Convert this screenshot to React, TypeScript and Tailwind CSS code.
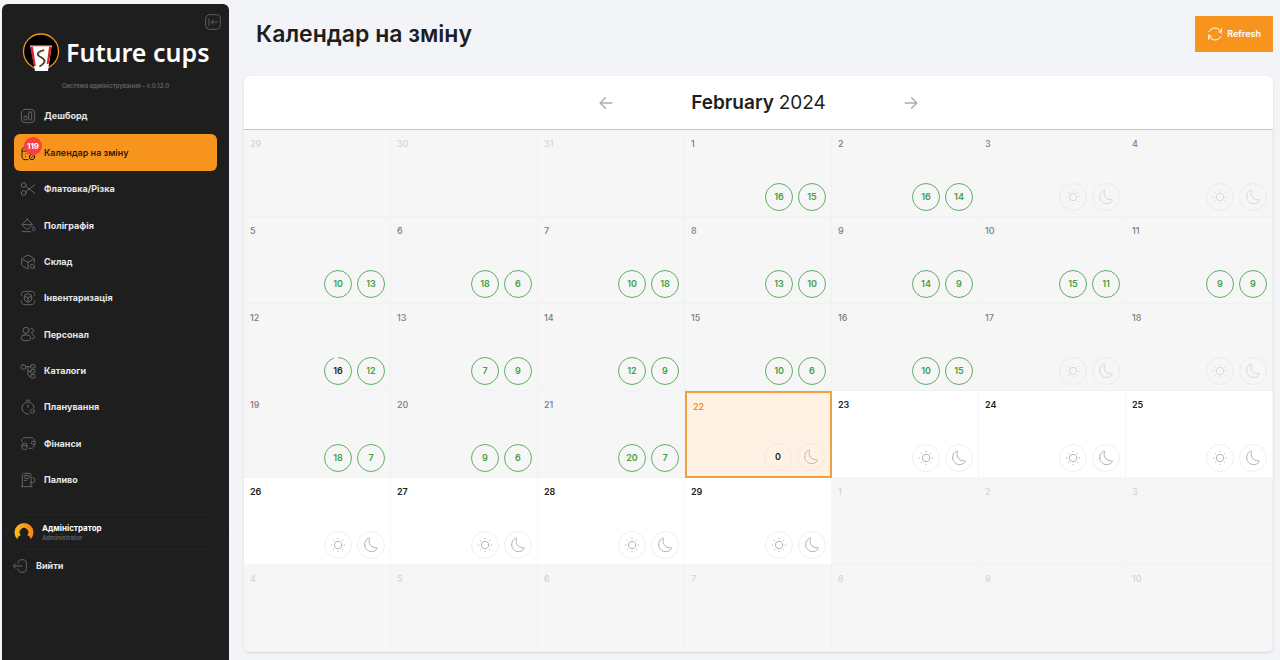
import React, { useState } from "react";

type Shift = number | "sun" | "moon";

type Day = {
  day: number;
  kind: "out" | "past" | "today" | "next";
  shifts: Shift[];
};

const past = (day: number, a: Shift = "sun", b: Shift = "moon"): Day => ({ day, kind: "past", shifts: [a, b] });
const next = (day: number): Day => ({ day, kind: "next", shifts: ["sun", "moon"] });
const out = (day: number): Day => ({ day, kind: "out", shifts: [] });

const days: Day[] = [
  out(29), out(30), out(31), past(1, 16, 15), past(2, 16, 14), past(3), past(4),
  past(5, 10, 13), past(6, 18, 6), past(7, 10, 18), past(8, 13, 10), past(9, 14, 9), past(10, 15, 11), past(11, 9, 9),
  past(12, 16, 12), past(13, 7, 9), past(14, 12, 9), past(15, 10, 6), past(16, 10, 15), past(17), past(18),
  past(19, 18, 7), past(20, 9, 6), past(21, 20, 7), { day: 22, kind: "today", shifts: [0, "moon"] }, next(23), next(24), next(25),
  next(26), next(27), next(28), next(29), out(1), out(2), out(3),
  out(4), out(5), out(6), out(7), out(8), out(9), out(10),
];

const cellStyle = {
  out: "bg-[#f6f6f6] border-[#f0f1f3] text-[#d3d3d5] font-medium",
  past: "bg-[#f6f6f6] border-[#f0f1f3] text-[#7c7c7e] font-medium",
  today: "bg-[#fff2e5] text-[#f7931e] font-semibold",
  next: "bg-white border-[#f6f6f7] text-[#222224] font-semibold",
};

function Icon({ children, className = "size-4" }: { children: React.ReactNode; className?: string }) {
  return (
    <svg
      viewBox="0 0 24 24"
      className={`shrink-0 ${className}`}
      fill="none"
      stroke="currentColor"
      strokeWidth="1.5"
      strokeLinecap="round"
      strokeLinejoin="round"
      aria-hidden="true"
    >
      {children}
    </svg>
  );
}

const menu = [
  {
    label: "Дешборд",
    icon: (
      <>
        <rect x="2" y="2" width="20" height="20" rx="6" />
        <rect x="6" y="12" width="4.5" height="6" rx="1.8" />
        <rect x="13" y="6" width="4.5" height="12" rx="1.8" />
      </>
    ),
  },
  {
    label: "Календар на зміну",
    badge: 119,
    icon: (
      <>
        <path d="M8 2v3M16 2v3M3 9h17M12 22H8c-3.500 0-5-2-5-5V8.500c0-3 1.500-5 5-5h8c3.500 0 5 2 5 5V12" />
        <circle cx="18" cy="18" r="4" />
        <path d="M16.500 18l1 1 2-2M8 13h.01M12 13h.01M8 17h.01" />
      </>
    ),
  },
  {
    label: "Флатовка/Різка",
    icon: (
      <>
        <circle cx="5.500" cy="6" r="3.500" />
        <circle cx="5.500" cy="18" r="3.500" />
        <path d="M22 6L8.500 16M22 18L8.500 8" />
      </>
    ),
  },
  {
    label: "Поліграфія",
    icon: (
      <>
        <path d="M10 2l7.500 8c1 1 1 2 0 3l-4.500 4.500c-1.500 1.200-3 1.200-4.500 0L4 13c-1-1-1-2 0-3l7.500-7M3.500 11.500H18M3 22h13" />
        <path d="M20.500 15s-2 2.200-2 3.600a2 2 0 004 0c0-1.400-2-3.600-2-3.600z" />
      </>
    ),
  },
  {
    label: "Склад",
    icon: (
      <>
        <path d="M3 7.500l9 5 9-5M12 21.500v-9M21.500 13V9c0-1.600-1-3-2.400-3.700L14 2.500c-1.200-.7-2.800-.7-4 0L4.800 5.300C3.500 6 2.500 7.500 2.500 9v6c0 1.600 1 3 2.300 3.700l5.200 2.800c.7.400 1.300.5 2 .5" />
        <circle cx="18.500" cy="18.500" r="3" />
        <path d="M22.500 22.500l-1.500-1.500" />
      </>
    ),
  },
  {
    label: "Інвентаризація",
    icon: (
      <>
        <path d="M2 8V7c0-3 2-5 5-5h10c3 0 5 2 5 5v1M22 16v1c0 3-2 5-5 5H7c-3 0-5-2-5-5v-1" />
        <path d="M12 5.500l5.500 3v6.500L12 18.500 6.500 15V8.500zM6.800 9l5.200 3 5.200-3M12 12v6" />
      </>
    ),
  },
  {
    label: "Персонал",
    icon: (
      <>
        <circle cx="9" cy="6.500" r="4.500" />
        <path d="M16.500 3.500a3.600 3.600 0 010 7.200M18.500 19c2-.5 3.500-1.500 3.500-3s-1.500-2.500-3.500-3" />
        <rect x="2" y="13.500" width="14" height="8.500" rx="4.250" />
      </>
    ),
  },
  {
    label: "Каталоги",
    icon: (
      <>
        <rect x="1.500" y="3" width="7" height="6" rx="2" />
        <rect x="16" y="2.500" width="6.500" height="5" rx="1.500" />
        <rect x="16" y="10" width="6.500" height="5" rx="1.500" />
        <rect x="16" y="17.500" width="6.500" height="5" rx="1.500" />
        <path d="M8.500 5.500H16M12 5.500V17c0 2 1 3 3 3h1M12 12.500h4" />
      </>
    ),
  },
  {
    label: "Планування",
    icon: (
      <>
        <path d="M13 22.500h-1a9 9 0 119-9v.5M12 8.500V13M9 1.800h6" />
        <circle cx="18.500" cy="18.500" r="3" />
      </>
    ),
  },
  {
    label: "Фінанси",
    icon: (
      <>
        <path d="M2.500 10V8.500c0-3 2-4.500 4.500-4.500h10c2.800 0 4.500 1.800 4.500 4.500v1h-2.300c-1.200 0-2.200 1-2.200 2.300s1 2.200 2.200 2.200h2.300v1c0 2.800-1.800 5-4.500 5h-3" />
        <rect x="3" y="12.500" width="7.500" height="9.500" rx="2.500" />
        <path d="M3 16h7.500M22.500 9.500V14" />
      </>
    ),
  },
  {
    label: "Паливо",
    icon: (
      <>
        <path d="M3.500 22V5c0-2 1.300-3 3-3h7c2 0 3 1 3 3v17M2 22h16M6.500 12.500h3.500M16.500 16H20c1 0 2-1 2-2v-4l-2.500-1.500" />
        <rect x="6.500" y="5" width="7" height="4.500" rx="1.500" />
      </>
    ),
  },
];

function Logo() {
  return (
    <svg viewBox="0 0 38 38" className="size-[38px]" aria-hidden="true">
      <circle cx="19" cy="18.500" r="17.500" fill="#000" stroke="#f7931e" strokeWidth="1.300" />
      <path d="M8.500 13h21l-3.500 25H13z" fill="#fff" />
      <path d="M8 13h2.800l3 20h-1.800zM30 13h-2.800l-2.500 18h1.800z" fill="#d8232a" />
      <path d="M8 12.500h22v1.300H8z" fill="#f3b8b8" />
      <path d="M22 17c-4 .8-7.500 2.800-6 5.200 1.200 2 6.500 2.600 6.500 5.800 0 2.500-2.500 4-5 5.500" fill="none" stroke="#2b2413" strokeWidth="1.500" />
      <path d="M22.500 18c-3 .8-5.500 2-5 3.800M23.500 27c.4 2.600-1.500 4.500-4 6" fill="none" stroke="#e39a2b" strokeWidth=".9" />
    </svg>
  );
}

function ShiftBadge({ shift, day, kind }: { shift: Shift; day: number; kind: Day["kind"] }) {
  const soft = kind === "past" ? "border-[#ebebec] text-[#d6d7da]" : kind === "today" ? "border-[#f5e8dd] text-[#bdb9b9]" : "border-[#f0f0f1] text-[#b3b3b7]";

  if (typeof shift !== "number") {
    return (
      <span className={`flex size-7 items-center justify-center rounded-full border ${soft}`}>
        {shift === "sun" ? (
          <Icon>
            <circle cx="12" cy="12" r="5.500" />
            <path d="M12 2v.6M12 21.400v.6M2 12h.6M21.400 12h.6M4.900 4.900l.5.5M18.600 18.600l.5.5M19.100 4.900l-.5.5M5.400 18.600l-.5.5" />
          </Icon>
        ) : (
          <Icon>
            <path d="M2.500 12.400c.4 5.100 4.700 9.300 9.900 9.500 3.700.2 7-1.500 8.900-4.300.8-1.100.4-1.800-1-1.600-.7.100-1.400.2-2.100.1-5-.2-9-4.400-9.100-9.300 0-1.300.3-2.600.8-3.700.5-1.300-.1-1.900-1.400-1.300-4 1.700-6.500 5.900-6 10.600z" />
          </Icon>
        )}
      </span>
    );
  }

  const partial = kind === "past" && day === 12 && shift === 16;
  if (partial) {
    return (
      <span className="relative flex size-7 items-center justify-center font-semibold text-[#222224]">
        <svg viewBox="0 0 28 28" className="absolute inset-0 size-7 -rotate-90" aria-hidden="true">
          <circle cx="14" cy="14" r="13.500" fill="none" stroke="#5fae63" pathLength="100" strokeDasharray="95 5" />
        </svg>
        {shift}
      </span>
    );
  }

  return (
    <span
      className={`flex size-7 items-center justify-center rounded-full border font-semibold ${
        kind === "today" ? "border-[#f5e8dd] text-[#222224]" : "border-[#5fae63] text-[#43a047]"
      }`}
    >
      {shift}
    </span>
  );
}

function Sidebar() {
  const [active, setActive] = useState<number>(1);

  return (
    <aside className="mt-1 ml-0.5 flex w-[227px] shrink-0 flex-col rounded-t-md bg-[#1e1e1e] text-[9px]">
      <div className="flex justify-end pt-2.5 pr-2">
        <button aria-label="Згорнути меню" className="text-[#5c5c5c]">
          <Icon>
            <rect x="1" y="1" width="22" height="22" rx="6" />
            <path d="M6 7v10M19 12H9.500M13 8.500L9.500 12l3.500 3.500" />
          </Icon>
        </button>
      </div>
      <div className="mt-0.5 flex h-10 items-center gap-1.5 pl-5">
        <Logo />
        <span className="font-['Noto_Sans','Open_Sans',sans-serif] text-[25px] leading-8 font-semibold text-white">Future cups</span>
      </div>
      <p className="mt-2 mb-1.5 text-center text-[6px] leading-3 font-bold text-[#5c5c5c]">Система адміністрування – v.0.12.0</p>

      <nav className="grid min-h-[400px] auto-rows-fr px-3">
        {menu.map((item, i) => (
          <a
            key={item.label}
            href="#"
            onClick={() => setActive(i)}
            className={`flex items-center gap-2 rounded-md px-1.5 ${
              active === i ? "bg-[#f7941e] font-semibold text-[#2a1c0c]" : "font-bold text-[#e6e6e6]"
            }`}
          >
            <span className={`relative ${active === i ? "text-[#2a1c0c]" : "text-[#666]"}`}>
              <Icon>{item.icon}</Icon>
              {item.badge && (
                <span className="absolute -top-2 left-1 flex size-[18px] items-center justify-center rounded-full bg-[#f8413c] text-[8px] font-bold text-white">
                  {item.badge}
                </span>
              )}
            </span>
            {item.label}
          </a>
        ))}
      </nav>

      <div className="mx-1 mt-4 flex h-9 items-center gap-2 rounded-full border border-[#242424] px-[7px]">
        <svg viewBox="0 0 20 20" className="size-5" aria-hidden="true">
          <defs>
            <linearGradient id="avatar" x1="0" x2="1">
              <stop offset="0" stopColor="#fdb913" />
              <stop offset="1" stopColor="#f58220" />
            </linearGradient>
          </defs>
          <path
            d="M3.200 17.200A9.500 9.500 0 1116.800 17.200c-.3-2-1.300-3.200-3.600-4a4.300 4.300 0 10-6.400 0c-2.300.8-3.300 2-3.600 4z"
            fill="url(#avatar)"
          />
        </svg>
        <div>
          <p className="text-[8px] leading-3 font-bold text-white">Адміністратор</p>
          <p className="text-[6px] leading-2 font-bold text-[#5c5c5c]">Administrator</p>
        </div>
      </div>
      <button className="mt-2 flex items-center gap-2 self-start pl-2.5 font-bold text-[#e6e6e6]">
        <span className="text-[#666]">
          <Icon>
            <path d="M9 7.500C9.300 4 11 2.500 15 2.500h.5c4.500 0 6 1.800 6 6v7c0 4.200-1.500 6-6 6H15c-4 0-5.700-1.500-6-5M15 12H3M5.500 8.500L2 12l3.500 3.500" />
          </Icon>
        </span>
        Вийти
      </button>
    </aside>
  );
}

export default function App() {
  return (
    <div className="flex min-h-screen bg-[#f2f4f8] font-['Inter','Liberation_Sans',sans-serif] text-[#1e1e20]">
      <Sidebar />
      <main className="min-w-0 flex-1 pt-4 pr-[7px] pb-[7px] pl-[15px]">
        <header className="mb-6 flex items-center justify-between">
          <h1 className="pl-3 text-[23px] font-semibold">Календар на зміну</h1>
          <button className="flex h-9 items-center gap-1 bg-[#f7941e] px-3 text-[9px] font-semibold text-white">
            <Icon>
              <path d="M21.500 11A9.600 9.600 0 004.500 6.500L3 8.500M2.500 13a9.600 9.600 0 0017 4.500l1.500-2M21.500 4v5h-4M2.500 20v-5h4" />
            </Icon>
            Refresh
          </button>
        </header>

        <section className="overflow-hidden rounded-md bg-white shadow-sm">
          <div className="flex h-[54px] items-center justify-center gap-[78px] border-b border-[#c4c4c6]">
            <button aria-label="Попередній місяць" className="text-[#adadb8]">
              <Icon className="size-3.5">
                <path d="M22 12H3M11 3l-9 9 9 9" strokeWidth="2.500" />
              </Icon>
            </button>
            <h2 className="text-[19px] leading-7 font-semibold">
              February <span className="font-normal">2024</span>
            </h2>
            <button aria-label="Наступний місяць" className="text-[#adadb8]">
              <Icon className="size-3.5">
                <path d="M2 12h19M13 3l9 9-9 9" strokeWidth="2.500" />
              </Icon>
            </button>
          </div>
          <div className="grid grid-cols-7 text-[9px]">
            {days.map((d, i) => (
              <div
                key={i}
                className={`flex h-[87px] flex-col justify-between pt-1.5 pr-[5px] pb-[5px] pl-1.5 ${
                  d.kind === "today" ? "border-2 border-[#f0a040]" : "border-r border-b"
                } ${cellStyle[d.kind]}`}
              >
                <span className="leading-4">{d.day}</span>
                <div className="flex justify-end gap-[5px]">
                  {d.shifts.map((s, n) => (
                    <ShiftBadge key={n} shift={s} day={d.day} kind={d.kind} />
                  ))}
                </div>
              </div>
            ))}
          </div>
        </section>
      </main>
    </div>
  );
}
